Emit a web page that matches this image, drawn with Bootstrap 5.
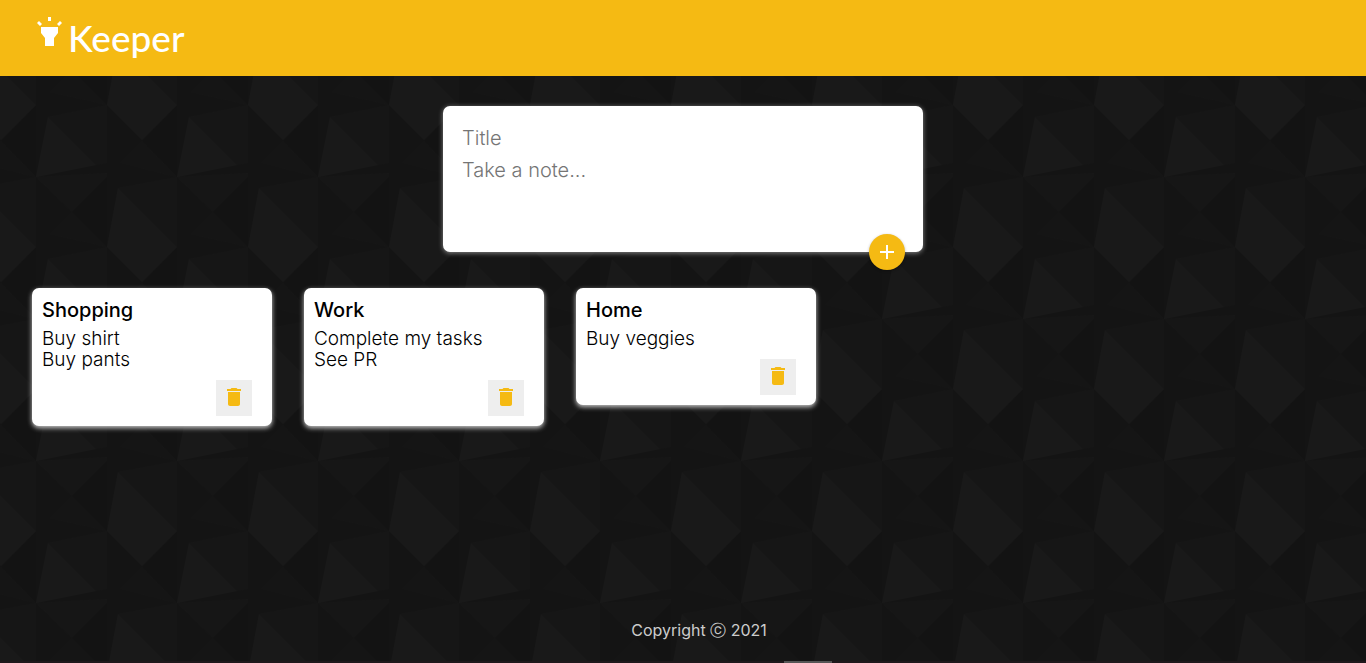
<!DOCTYPE html>
<html lang="en">
<head>
<meta charset="utf-8">
<meta name="viewport" content="width=device-width, initial-scale=1">
<title>Keeper</title>
<link href="https://cdn.jsdelivr.net/npm/bootstrap@5.3.0/dist/css/bootstrap.min.css" rel="stylesheet">
<style>
:root { --keeper: #f5ba13; }
body {
  font-family: Inter, "Liberation Sans", sans-serif;
  background-color: #141414;
  background-position: 0 105px;
  /* faceted dark tile */
  background-image: url("data:image/svg+xml,%3Csvg xmlns='http://www.w3.org/2000/svg' width='141' height='142'%3E%3Cdefs%3E%3Cg id='t'%3E%3Cpath fill='%23161616' d='M118 83L177 72V142z'/%3E%3Cpath fill='%23191919' d='M118 83L177 142 142 177 107 142z'/%3E%3Cpath fill='%23161616' d='M48 12L107 0V58L96 60z'/%3E%3Cpath fill='%23191919' d='M48 12L96 60 36 72z'/%3E%3Cpath fill='%23161616' d='M36 72L107 68V72L72 107z'/%3E%3Cpath fill='%23151515' d='M142 36L120 58 177 72zM72 107L50 129 107 142z'/%3E%3Cpath fill='%23131313' d='M142 36L177 0V72zM72 107L107 72V142z'/%3E%3C/g%3E%3C/defs%3E%3Cuse href='%23t'/%3E%3Cuse href='%23t' x='-141'/%3E%3Cuse href='%23t' y='-142'/%3E%3Cuse href='%23t' x='-141' y='-142'/%3E%3C/svg%3E");
}
.topbar { background: var(--keeper); height: 76px; padding: 0 36px; }
.brand { font-family: Lato, sans-serif; font-size: 37px; line-height: 44px; font-weight: 500; }
.brand svg { margin-bottom: 14px; }
.composer { width: 480px; max-width: 100%; margin-top: 30px; padding: 16px 15px 18px; border-radius: 7px; box-shadow: 0 1px 5px #8a8a8a; }
.field { padding: 4px; font-size: 20px; font-weight: 300; line-height: 24px; height: 32px; resize: none; outline: 0; }
textarea.field { height: 80px; }
.field::placeholder { color: #757575; opacity: 1; }
.add-btn { right: 18px; bottom: -18px; width: 36px; height: 36px; background: var(--keeper); box-shadow: 0 1px 3px rgba(0,0,0,.3); }
.notes { gap: 32px; padding: 0 32px; margin-top: 36px; }
.note { width: 240px; padding: 10px; border-radius: 7px; box-shadow: 0 2px 5px #ccc; }
.note h1 { font-size: 20px; line-height: 24px; margin-bottom: 6px; font-weight: 500; }
.note p { font-size: 19px; font-weight: 300; line-height: 21px; margin-bottom: 10px; white-space: pre-line; }
.del-btn { width: 36px; height: 36px; margin-right: 10px; background: #eee; color: var(--keeper); }
.copy { color: #ccc; font-size: 16px; line-height: 24px; padding: 0 0 19px 32px; }
.strip { height: 2px; background: #1e181b; }
.strip span { width: 48px; height: 2px; margin-left: 57.4%; background: #555; }
</style>
</head>
<body class="d-flex flex-column min-vh-100">
<header class="topbar d-flex align-items-center">
  <a href="#" class="brand d-flex align-items-center text-white text-decoration-none">
    <svg width="28" height="32" viewBox="0 0 28 32" fill="#fff" aria-hidden="true"><path d="M5 12H22V18L18 23V31H9V23L5 18zM12 2H15V6H12zM3 6L6 9 4 11 1 8zM24 6L26 8 23 11 21 9z"/></svg>
    <span class="ms-1">Keeper</span>
  </a>
</header>
<main class="flex-grow-1">
  <form class="composer position-relative bg-white mx-auto">
    <input class="field d-block w-100 border-0" type="text" placeholder="Title" aria-label="Title">
    <textarea class="field d-block w-100 border-0" placeholder="Take a note..." aria-label="Note"></textarea>
    <button type="button" class="add-btn position-absolute d-flex align-items-center justify-content-center border-0 rounded-circle p-0" aria-label="Add note">
      <svg width="24" height="24" fill="#fff"><path d="M19 13h-6v6h-2v-6H5v-2h6V5h2v6h6z"/></svg>
    </button>
  </form>
  <section class="notes d-flex flex-wrap align-items-start">
    <article class="note bg-white text-black">
      <h1>Shopping</h1>
      <p>Buy shirt
Buy pants</p>
      <button type="button" class="del-btn d-flex align-items-center justify-content-center border-0 p-0 ms-auto" aria-label="Delete Shopping"><svg width="24" height="24" viewBox="0 1 24 24" fill="currentColor"><path d="M6 19c0 1.100.9 2 2 2h8c1.100 0 2-.9 2-2V7H6v12zM19 4h-3.500l-1-1h-5l-1 1H5v2h14V4z"/></svg></button>
    </article>
    <article class="note bg-white text-black">
      <h1>Work</h1>
      <p>Complete my tasks
See PR</p>
      <button type="button" class="del-btn d-flex align-items-center justify-content-center border-0 p-0 ms-auto" aria-label="Delete Work"><svg width="24" height="24" viewBox="0 1 24 24" fill="currentColor"><path d="M6 19c0 1.100.9 2 2 2h8c1.100 0 2-.9 2-2V7H6v12zM19 4h-3.500l-1-1h-5l-1 1H5v2h14V4z"/></svg></button>
    </article>
    <article class="note bg-white text-black">
      <h1>Home</h1>
      <p>Buy veggies</p>
      <button type="button" class="del-btn d-flex align-items-center justify-content-center border-0 p-0 ms-auto" aria-label="Delete Home"><svg width="24" height="24" viewBox="0 1 24 24" fill="currentColor"><path d="M6 19c0 1.100.9 2 2 2h8c1.100 0 2-.9 2-2V7H6v12zM19 4h-3.500l-1-1h-5l-1 1H5v2h14V4z"/></svg></button>
    </article>
  </section>
</main>
<footer>
  <p class="copy text-center mb-0">Copyright ⓒ 2021</p>
  <div class="strip"><span class="d-block"></span></div>
</footer>
<script src="https://cdn.jsdelivr.net/npm/bootstrap@5.3.0/dist/js/bootstrap.bundle.min.js"></script>
</body>
</html>
